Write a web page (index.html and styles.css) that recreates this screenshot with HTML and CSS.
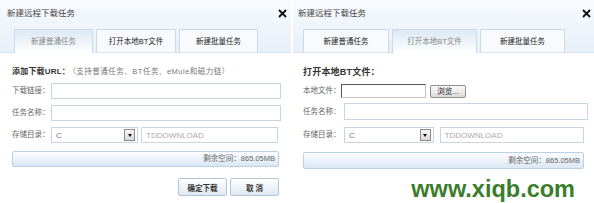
FILE: index.html
```html
<!DOCTYPE html>
<html lang="zh-CN">
<head>
<meta charset="utf-8">
<title>新建远程下载任务</title>
<link rel="stylesheet" href="styles.css">
</head>
<body>
<div class="screen">
  <section class="dlg dlg-left">
    <header class="dlg-head">
      <div class="title-row">
        <span class="title">新建远程下载任务</span>
        <svg class="close" width="9" height="9" viewBox="0 0 9 9"><path d="M1 1L8 8M8 1L1 8" stroke="#111" stroke-width="1.8" fill="none"/></svg>
      </div>
      <nav class="tabs">
        <div class="tab active">新建普通任务</div>
        <div class="tab">打开本地BT文件</div>
        <div class="tab">新建批量任务</div>
      </nav>
    </header>
    <div class="dlg-body">
      <h2 class="sect"><b>添加下载URL：</b><span class="hint">（支持普通任务、BT任务、eMule和磁力链）</span></h2>
      <div class="row first"><label class="lbl">下载链接：</label><div class="inp grow"></div></div>
      <div class="row"><label class="lbl">任务名称：</label><div class="inp grow"></div></div>
      <div class="row dir">
        <label class="lbl">存储目录：</label>
        <div class="inp sel"><span class="val">C</span><span class="arrow"></span></div>
        <div class="inp path"><span class="ph">TDDOWNLOAD</span></div>
      </div>
      <div class="space">剩余空间：865.05MB</div>
      <div class="btns"><button class="btn">确定下载</button><button class="btn">取 消</button></div>
    </div>
  </section>

  <section class="dlg dlg-right">
    <header class="dlg-head">
      <div class="title-row">
        <span class="title">新建远程下载任务</span>
        <svg class="close" width="9" height="9" viewBox="0 0 9 9"><path d="M1 1L8 8M8 1L1 8" stroke="#111" stroke-width="1.8" fill="none"/></svg>
      </div>
      <nav class="tabs">
        <div class="tab">新建普通任务</div>
        <div class="tab active">打开本地BT文件</div>
        <div class="tab">新建批量任务</div>
      </nav>
    </header>
    <div class="dlg-body">
      <h2 class="sect big"><b>打开本地BT文件：</b></h2>
      <div class="row file"><label class="lbl">本地文件：</label><div class="finp"></div><button class="browse">浏览...</button></div>
      <div class="row name"><label class="lbl">任务名称：</label><div class="inp grow"></div></div>
      <div class="row dir">
        <label class="lbl">存储目录：</label>
        <div class="inp sel"><span class="val">C</span><span class="arrow"></span></div>
        <div class="inp path"><span class="ph">TDDOWNLOAD</span></div>
      </div>
      <div class="space">剩余空间：865.05MB</div>
      <div class="mark">www.xiqb.com</div>
    </div>
  </section>
</div>
</body>
</html>
```
FILE: styles.css
```css
* { box-sizing: border-box; margin: 0; padding: 0; }
html, body { background: #fff; }
body {
  width: 594px;
  height: 203px;
  overflow: hidden;
  font-family: "Liberation Sans", "Noto Sans CJK SC", sans-serif;
  font-size: 7.5px;
  color: #555;
}
.screen { display: flex; gap: 2px; height: 203px; }
.dlg { display: flex; flex-direction: column; background: #fff; }
.dlg-left { width: 291px; }
.dlg-right { width: 301px; }

.dlg-head {
  background: linear-gradient(#f8fbfe, #e7eff8);
  border-bottom: 1px solid #dbe5ef;
  height: 53px;
  display: flex;
  flex-direction: column;
}
.title-row {
  height: 29px;
  display: flex;
  justify-content: space-between;
  align-items: flex-start;
  padding-top: 7px;
}
.dlg-left .title-row { padding-left: 7px; padding-right: 4px; }
.dlg-right .title-row { padding-left: 5px; padding-right: 3px; }
.title { font-size: 8.5px; line-height: 12px; color: #444; }
.close { margin-top: 2px; }

.tabs { display: flex; align-items: flex-end; gap: 3px; height: 23px; }
.dlg-left .tabs { padding-left: 14px; }
.dlg-right .tabs { padding-left: 10px; }
.tab {
  height: 23px;
  border: 1px solid #cbd9e8;
  border-bottom: none;
  background: #f8fbfe;
  color: #222;
  text-align: center;
  line-height: 12px;
  padding-top: 6px;
  font-size: 7.5px;
}
.tab.active {
  height: 24px;
  margin-bottom: -1px;
  background: linear-gradient(#dce8f5, #ffffff);
  color: #888;
}
.dlg-left .tab { width: 79px; }
.dlg-left .tab:nth-child(2) { width: 80px; }
.dlg-right .tab { width: 85px; }
.dlg-right .tab:first-child { width: 86px; }

.dlg-body { display: flex; flex-direction: column; }
.dlg-left .dlg-body { padding: 0 10px 0 12px; }
.dlg-right .dlg-body { padding: 0 6px 0 10px; }

.sect { margin-top: 13px; line-height: 12px; font-size: 8px; font-weight: normal; color: #333; white-space: nowrap; }
.sect b { font-weight: bold; letter-spacing: 0.2px; }
.sect.big { font-size: 9px; }
.hint { font-size: 7.5px; color: #777; letter-spacing: 0.5px; margin-left: 2px; }

.row { display: flex; align-items: center; height: 16px; margin-top: 6px; }
.row.first { margin-top: 5px; }
.lbl { width: 39px; flex: none; line-height: 12px; color: #666; }
.dlg-right .lbl { width: 41px; }

.inp { height: 100%; border: 1px solid #c8d5e2; background: #fff; display: flex; align-items: center; }
.grow { flex: 1; }
.sel { width: 87px; justify-content: space-between; padding-left: 4px; padding-right: 2px; color: #777; font-size: 8px; }
.path { width: 137px; margin-left: 3px; padding-left: 4px; color: #aaa; font-size: 8px; }
.arrow {
  width: 11px; height: 12px;
  border: 1px solid #8a8a8a;
  background: linear-gradient(#f7f7f7, #d9d9d9);
  display: flex; align-items: center; justify-content: center;
}
.arrow::after {
  content: "";
  border-left: 2.5px solid transparent;
  border-right: 2.5px solid transparent;
  border-top: 3px solid #111;
}

.dlg-right .row.file { height: 14px; margin-top: 6px; }
.dlg-right .row.file .lbl { width: 38px; }
.finp {
  width: 85px; height: 14px;
  border: 1px solid #c3c3c3;
  border-top-color: #555;
  border-left-color: #555;
  background: #fff;
}
.browse {
  width: 36px; height: 13px; margin-left: 4px;
  border: 1px solid #8e8e8e; border-radius: 2px;
  background: linear-gradient(#fafafa, #dcdcdc);
  font: inherit; font-size: 7.5px; color: #222; line-height: 11px;
}
.dlg-right .row.name { height: 17px; margin-top: 5px; }
.dlg-right .row.dir { margin-top: 7px; margin-right: 4px; }
.dlg-right .sel { width: 90px; }
.dlg-right .path { width: 145px; margin-left: 6px; }

.space {
  margin-top: 8px; height: 16px;
  border: 1px solid #bcd0e4; border-radius: 2px;
  background: linear-gradient(#fbfdff, #dbe7f4);
  text-align: right; padding-right: 3px;
  line-height: 14px; color: #666; font-size: 7.5px;
  margin-right: 2px;
}
.dlg-right .space { margin-top: 9px; height: 17px; line-height: 15px; margin-right: 4px; }

.btns { display: flex; justify-content: flex-end; gap: 3px; margin-top: 11px; margin-right: 2px; }
.btn {
  width: 49px; height: 18px;
  border: 1px solid #b3c4d6; border-radius: 2px;
  background: linear-gradient(#ffffff, #dfe8f2);
  font: inherit; font-size: 7.5px; color: #333; font-weight: bold;
}

.mark {
  margin-top: 8px;
  align-self: flex-end;
  margin-right: 13px;
  font-family: "Liberation Sans", sans-serif;
  font-weight: bold;
  font-size: 23.5px;
  line-height: 24px;
  color: #3a7d2a;
}
```
